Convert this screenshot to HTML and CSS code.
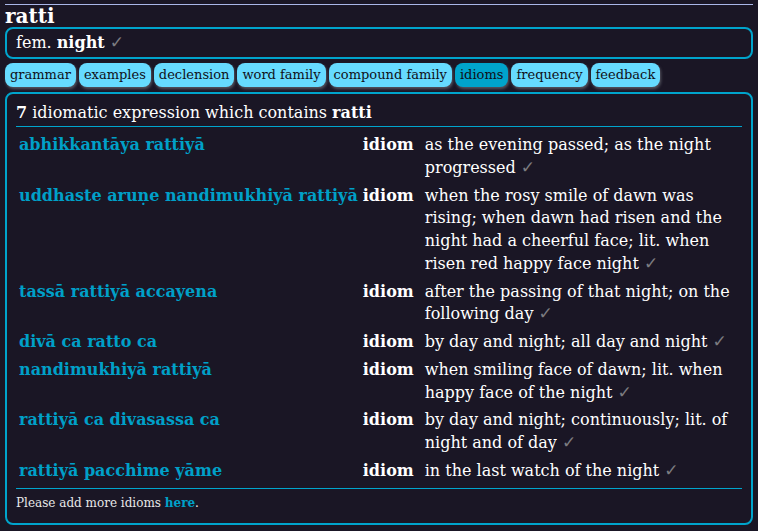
FILE: index.html
```html
<!DOCTYPE html>
<html>
<head>
<meta charset="utf-8">
<link rel="stylesheet" href="styles.css">
</head>
<body>
<div class="rule"></div>
<h1 class="head">ratti</h1>
<div class="box summary">fem. <b>night</b> <span class="ok">✓</span></div>
<nav class="tabs">
  <span class="tab">grammar</span>
  <span class="tab">examples</span>
  <span class="tab">declension</span>
  <span class="tab">word family</span>
  <span class="tab">compound family</span>
  <span class="tab active">idioms</span>
  <span class="tab">frequency</span>
  <span class="tab">feedback</span>
</nav>
<div class="box panel">
  <p class="title"><b>7</b> idiomatic expression which contains <b>ratti</b></p>
  <table class="idioms">
    <tr><td class="pali">abhikkantāya rattiyā</td><td class="pos">idiom</td><td class="mean">as the evening passed; as the night progressed <span class="ok">✓</span></td></tr>
    <tr><td class="pali">uddhaste aruṇe nandimukhiyā rattiyā</td><td class="pos">idiom</td><td class="mean">when the rosy smile of dawn was rising; when dawn had risen and the night had a cheerful face; lit. when risen red happy face night <span class="ok">✓</span></td></tr>
    <tr><td class="pali">tassā rattiyā accayena</td><td class="pos">idiom</td><td class="mean">after the passing of that night; on the following day <span class="ok">✓</span></td></tr>
    <tr><td class="pali">divā ca ratto ca</td><td class="pos">idiom</td><td class="mean">by day and night; all day and night <span class="ok">✓</span></td></tr>
    <tr><td class="pali">nandimukhiyā rattiyā</td><td class="pos">idiom</td><td class="mean">when smiling face of dawn; lit. when happy face of the night <span class="ok">✓</span></td></tr>
    <tr><td class="pali">rattiyā ca divasassa ca</td><td class="pos">idiom</td><td class="mean">by day and night; continuously; lit. of night and of day <span class="ok">✓</span></td></tr>
    <tr><td class="pali">rattiyā pacchime yāme</td><td class="pos">idiom</td><td class="mean">in the last watch of the night <span class="ok">✓</span></td></tr>
  </table>
  <p class="foot">Please add more idioms <a href="#">here</a>.</p>
</div>
</body>
</html>
```
FILE: styles.css
```css
html, body {
  background: #1a1625;
}
body {
  margin: 0;
  padding: 4px 5px 0 5px;
  font-family: "DejaVu Serif", serif;
  color: #ffffff;
  font-size: 16px;
}
.rule {
  border-top: 1px solid #a9b6e8;
}
.head {
  margin: 0;
  font-size: 20px;
  line-height: 22px;
  font-weight: bold;
}
.box {
  border: 2px solid #00a4cc;
  border-radius: 8px;
}
.summary {
  padding: 3px 9px;
  line-height: 22px;
  font-size: 16px;
}
.ok {
  color: #7c7c80;
  font-family: "DejaVu Sans", sans-serif;
  font-size: 17px;
  line-height: 1;
}
.tabs {
  display: flex;
  flex-wrap: wrap;
  gap: 3px;
  margin: 4px 0 5px 0;
}
.tab {
  background: #66dbff;
  color: #101018;
  font-size: 13px;
  line-height: 24px;
  padding: 0 5px;
  border-radius: 8px;
  box-shadow: 1px 2px 3px #555560;
}
.tab.active {
  background: #00a4cc;
}
.panel {
  padding: 7px 9px 10px 9px;
}
.title {
  margin: 0;
  line-height: 24px;
  padding-bottom: 1px;
  border-bottom: 1px solid #00a4cc;
}
.idioms {
  width: 100%;
  border-collapse: collapse;
  margin-top: 4px;
  line-height: 22.75px;
}
.idioms td {
  vertical-align: top;
  padding: 3px 0 2px 0;
}
.pali {
  color: #00a0c8;
  font-weight: bold;
  padding-left: 3px !important;
  padding-right: 5px !important;
  white-space: nowrap;
}
.pos {
  font-weight: bold;
  padding-right: 11px !important;
}
.mean {
  width: 100%;
}
.foot {
  margin: 3px 0 0 0;
  padding-top: 4px;
  border-top: 1px solid #00a4cc;
  font-size: 12px;
  line-height: 20px;
  color: #e8e8e8;
}
.foot a {
  color: #00a0c8;
  font-weight: bold;
  text-decoration: none;
}
```
